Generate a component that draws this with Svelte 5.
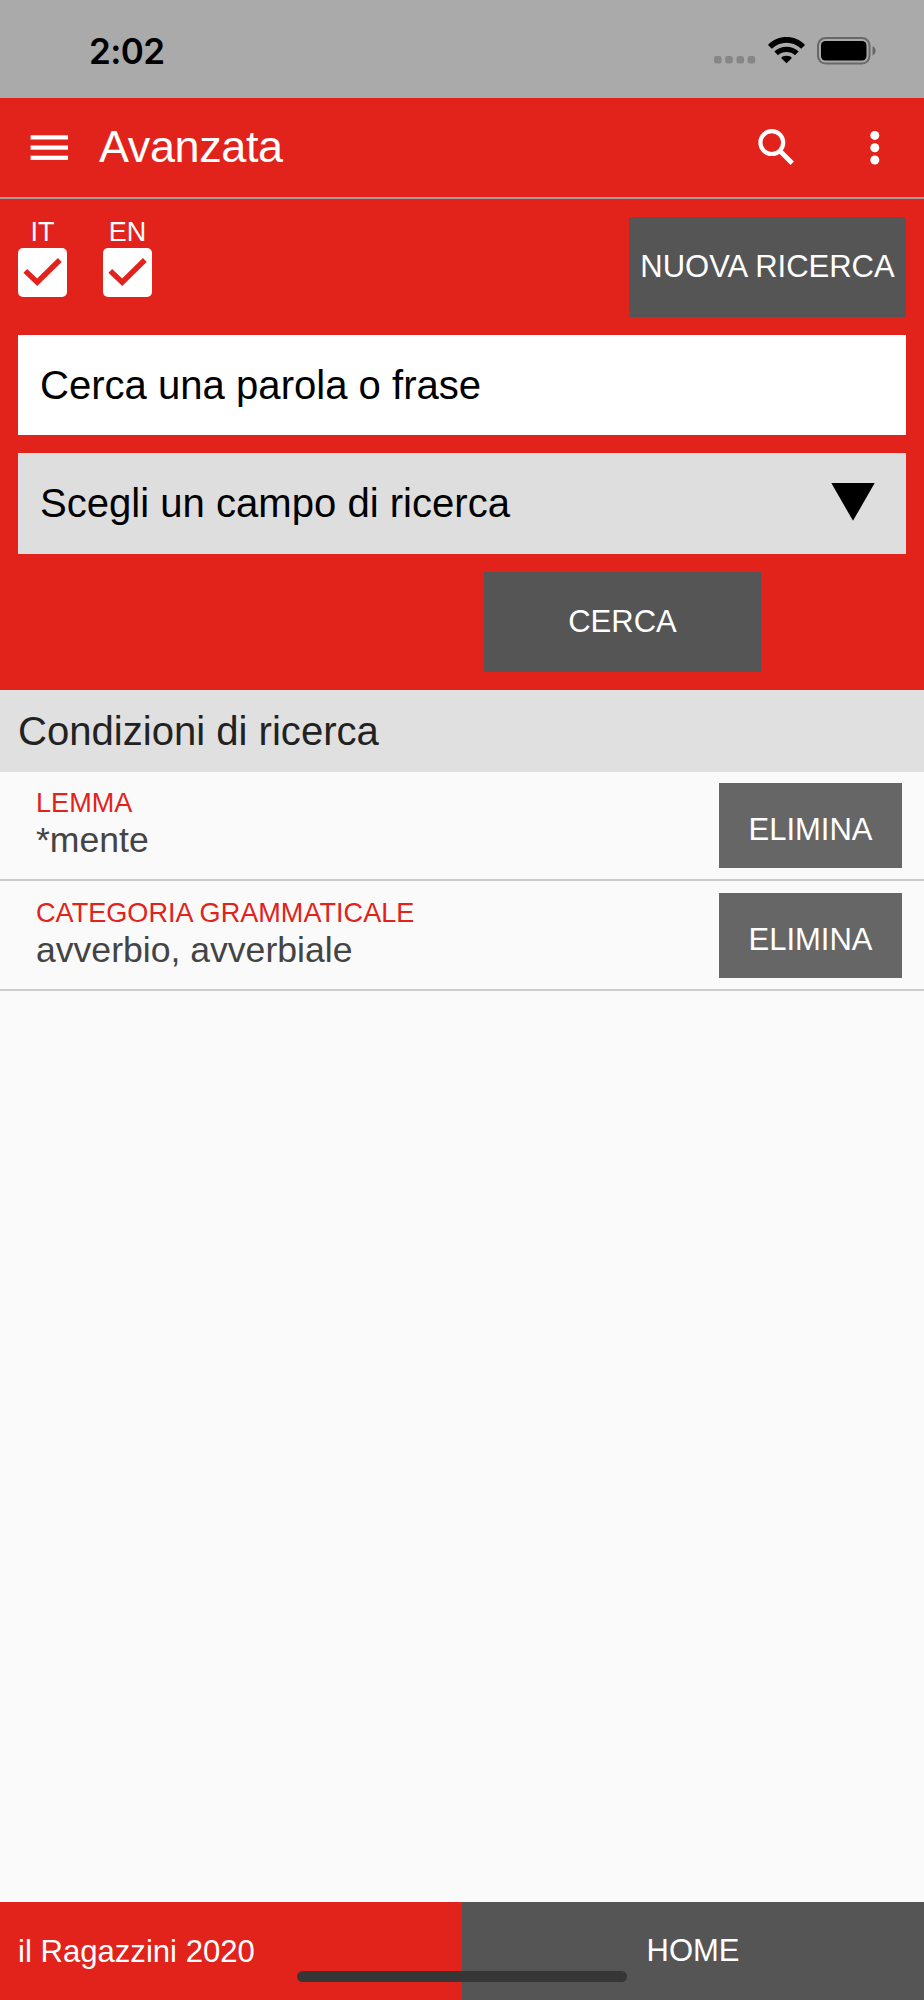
<script lang="ts">
  type Language = { code: string; checked: boolean };
  type Condition = { field: string; value: string };

  let query: string = '';

  let languages: Language[] = [
    { code: 'IT', checked: true },
    { code: 'EN', checked: true }
  ];

  const defaults: Condition[] = [
    { field: 'LEMMA', value: '*mente' },
    { field: 'CATEGORIA GRAMMATICALE', value: 'avverbio, avverbiale' }
  ];
  let conditions: Condition[] = [...defaults];

  const toggle = (i: number): void => {
    languages[i].checked = !languages[i].checked;
  };

  const remove = (i: number): void => {
    conditions = conditions.filter((_, j) => j !== i);
  };

  const reset = (): void => {
    query = '';
    conditions = [];
  };
</script>

<div class="screen">
  <div class="status">
    <span class="time">2:02</span>
    <div class="status-icons">
      <svg class="signal" width="42" height="8" viewBox="0 0 42 8">
        {#each [0, 11.2, 22.4, 33.6] as x}
          <rect {x} width="7.6" height="7.6" rx="2.4" fill="#868686" />
        {/each}
      </svg>
      <svg class="wifi" width="37" height="27" viewBox="0 0 37 27">
        <path d="M18.5 26.3 L13.3 21.2 Q13.3 19.2 18.5 18.8 Q23.7 19.2 23.7 21.2 Z" />
        <path d="M6.3 14.6 C12.8 8 24.2 8 30.7 14.6 L27 18.2 C22.4 14 14.6 14 10 18.2 Z" />
        <path d="M0 8 C9.8 -2.6 27.2 -2.6 37 8 L33.2 11.7 C25.2 3.6 11.8 3.6 3.8 11.7 Z" />
      </svg>
      <svg class="battery" width="59" height="28" viewBox="0 0 59 28">
        <rect x="1" y="1" width="51.5" height="25.6" rx="7.5" fill="none" stroke="#686868" stroke-width="2" />
        <rect x="4" y="4" width="45.5" height="19.6" rx="4.5" />
        <path d="M55.5 9.2 Q58.6 10.5 58.6 13.8 Q58.6 17.1 55.5 18.4 Z" fill="#686868" />
      </svg>
    </div>
  </div>

  <header>
    <button class="icon" aria-label="Menu">
      <svg width="38" height="26" viewBox="0 0 38 26" fill="#fff">
        <rect x="0.6" y="0.3" width="37.4" height="4.2" />
        <rect x="0.6" y="10.5" width="37.4" height="4.2" />
        <rect x="0.6" y="20.7" width="37.4" height="4.2" />
      </svg>
    </button>
    <h1>Avanzata</h1>
    <button class="icon search" aria-label="Cerca">
      <svg width="37" height="37" viewBox="0 0 37 37" fill="none" stroke="#fff">
        <circle cx="13.8" cy="13.6" r="11.4" stroke-width="4.2" />
        <path d="M22.6 22.6 L34.2 34.2" stroke-width="4.8" />
      </svg>
    </button>
    <button class="icon" aria-label="Altro">
      <svg width="10" height="34" viewBox="0 0 10 34" fill="#fff">
        <circle cx="4.8" cy="4.4" r="4.5" />
        <circle cx="4.8" cy="16.7" r="4.5" />
        <circle cx="4.8" cy="29" r="4.5" />
      </svg>
    </button>
  </header>

  <div class="form">
    <div class="top">
      {#each languages as lang, i}
        <button class="lang" on:click={() => toggle(i)}>
          <span>{lang.code}</span>
          <div class="box">
            {#if lang.checked}
              <svg width="49" height="49" viewBox="0 0 49 49">
                <path d="M7.3 22.9 L19.2 34.2 L41.8 12" fill="none" stroke="#e2231b" stroke-width="5.4" />
              </svg>
            {/if}
          </div>
        </button>
      {/each}
      <button class="dark new" on:click={reset}>NUOVA RICERCA</button>
    </div>
    <input bind:value={query} placeholder="Cerca una parola o frase" />
    <button class="select">
      <span>Scegli un campo di ricerca</span>
      <svg width="44" height="41" viewBox="0 0 44 41">
        <path d="M0.3 0 H43.7 L22 37.8 Z" />
      </svg>
    </button>
    <button class="dark submit">CERCA</button>
  </div>

  <h2>Condizioni di ricerca</h2>
  <main>
    {#each conditions as condition, i}
      <div class="row">
        <div class="condition">
          <div class="field">{condition.field}</div>
          <div class="value">{condition.value}</div>
        </div>
        <button class="delete" on:click={() => remove(i)}>ELIMINA</button>
      </div>
    {/each}
  </main>

  <footer>
    <div class="product">il Ragazzini 2020</div>
    <button class="dark home">HOME</button>
    <div class="indicator"></div>
  </footer>
</div>

<style>
  :global(body) {
    margin: 0;
  }

  .screen {
    display: flex;
    flex-direction: column;
    width: 924px;
    height: 2000px;
    background: #fafafa;
    font-family: 'Liberation Sans', Arial, sans-serif;
  }

  .screen * {
    box-sizing: border-box;
  }

  svg {
    display: block;
    flex: none;
  }

  button {
    border: 0;
    margin: 0;
    padding: 0;
    background: none;
    color: #fff;
    font: inherit;
  }

  .status {
    display: flex;
    justify-content: space-between;
    height: 98px;
    padding: 0 48px 0 89px;
    background: #aaa;
    flex: none;
  }

  .time {
    padding-top: 29px;
    font: 600 35px/44px Inter, sans-serif;
    letter-spacing: -0.6px;
  }

  .status-icons {
    display: flex;
    align-items: flex-start;
    padding-top: 37px;
  }

  .signal {
    margin: 19px 12px 0 0;
  }

  .wifi {
    margin-right: 12px;
  }

  header {
    display: flex;
    align-items: center;
    height: 101px;
    padding: 0 44px 0 30px;
    background: #e2231b;
    border-bottom: 2px solid #a39c9b;
    flex: none;
  }

  h1 {
    flex: 1;
    margin: 0 0 2px 31px;
    color: #fff;
    font-size: 45px;
    font-weight: 400;
    line-height: 54px;
    letter-spacing: -0.4px;
  }

  .search {
    margin-right: 75px;
  }

  .form {
    display: flex;
    flex-direction: column;
    gap: 18px;
    height: 491px;
    padding: 18px;
    background: #e2231b;
    flex: none;
  }

  .top {
    display: flex;
    gap: 36px;
    height: 100px;
  }

  .lang {
    display: flex;
    flex-direction: column;
    align-items: center;
    width: 49px;
    font-size: 27px;
    line-height: 31px;
  }

  .box {
    width: 49px;
    height: 49px;
    background: #fff;
    border-radius: 5px;
  }

  .dark {
    background: #555;
    font-size: 31px;
  }

  .new {
    width: 277px;
    margin-left: auto;
    white-space: nowrap;
  }

  input {
    height: 100px;
    padding: 0 22px;
    border: 0;
    border-radius: 0;
    outline: none;
    background: #fff;
    color: #000;
    font: 40.1px 'Liberation Sans', Arial, sans-serif;
  }

  input::placeholder {
    color: #000;
    opacity: 1;
  }

  .select {
    display: flex;
    align-items: center;
    justify-content: space-between;
    height: 101px;
    padding: 0 31px 0 22px;
    background: #dedede;
    color: #000;
    font-size: 40.1px;
  }

  .submit {
    width: 277px;
    height: 100px;
    margin-left: 466px;
  }

  h2 {
    height: 82px;
    margin: 0;
    padding-left: 18px;
    background: #e0e0e0;
    color: #222;
    font-size: 40.1px;
    font-weight: 400;
    line-height: 82px;
    flex: none;
  }

  main {
    flex: 1;
  }

  .row {
    display: flex;
    justify-content: space-between;
    height: 109.4px;
    padding: 11.4px 22px 0 36px;
    border-bottom: 2px solid #ccc;
  }

  .condition {
    padding-top: 4px;
  }

  .field {
    color: #e2231b;
    font-size: 27.1px;
    line-height: 32px;
  }

  .value {
    color: #444;
    font-size: 35.6px;
    line-height: 42px;
  }

  .delete {
    width: 183px;
    height: 85px;
    padding-top: 9px;
    background: #666;
    font-size: 31px;
  }

  footer {
    position: relative;
    display: flex;
    height: 98px;
    flex: none;
  }

  .product {
    width: 50%;
    padding-left: 18px;
    background: #e2231b;
    color: #fff;
    font-size: 31.1px;
    line-height: 99px;
  }

  .home {
    width: 50%;
  }

  /* floats over both halves of the footer */
  .indicator {
    position: absolute;
    left: 297px;
    bottom: 18px;
    width: 330px;
    height: 11px;
    border-radius: 6px;
    background: #363636;
  }
</style>
